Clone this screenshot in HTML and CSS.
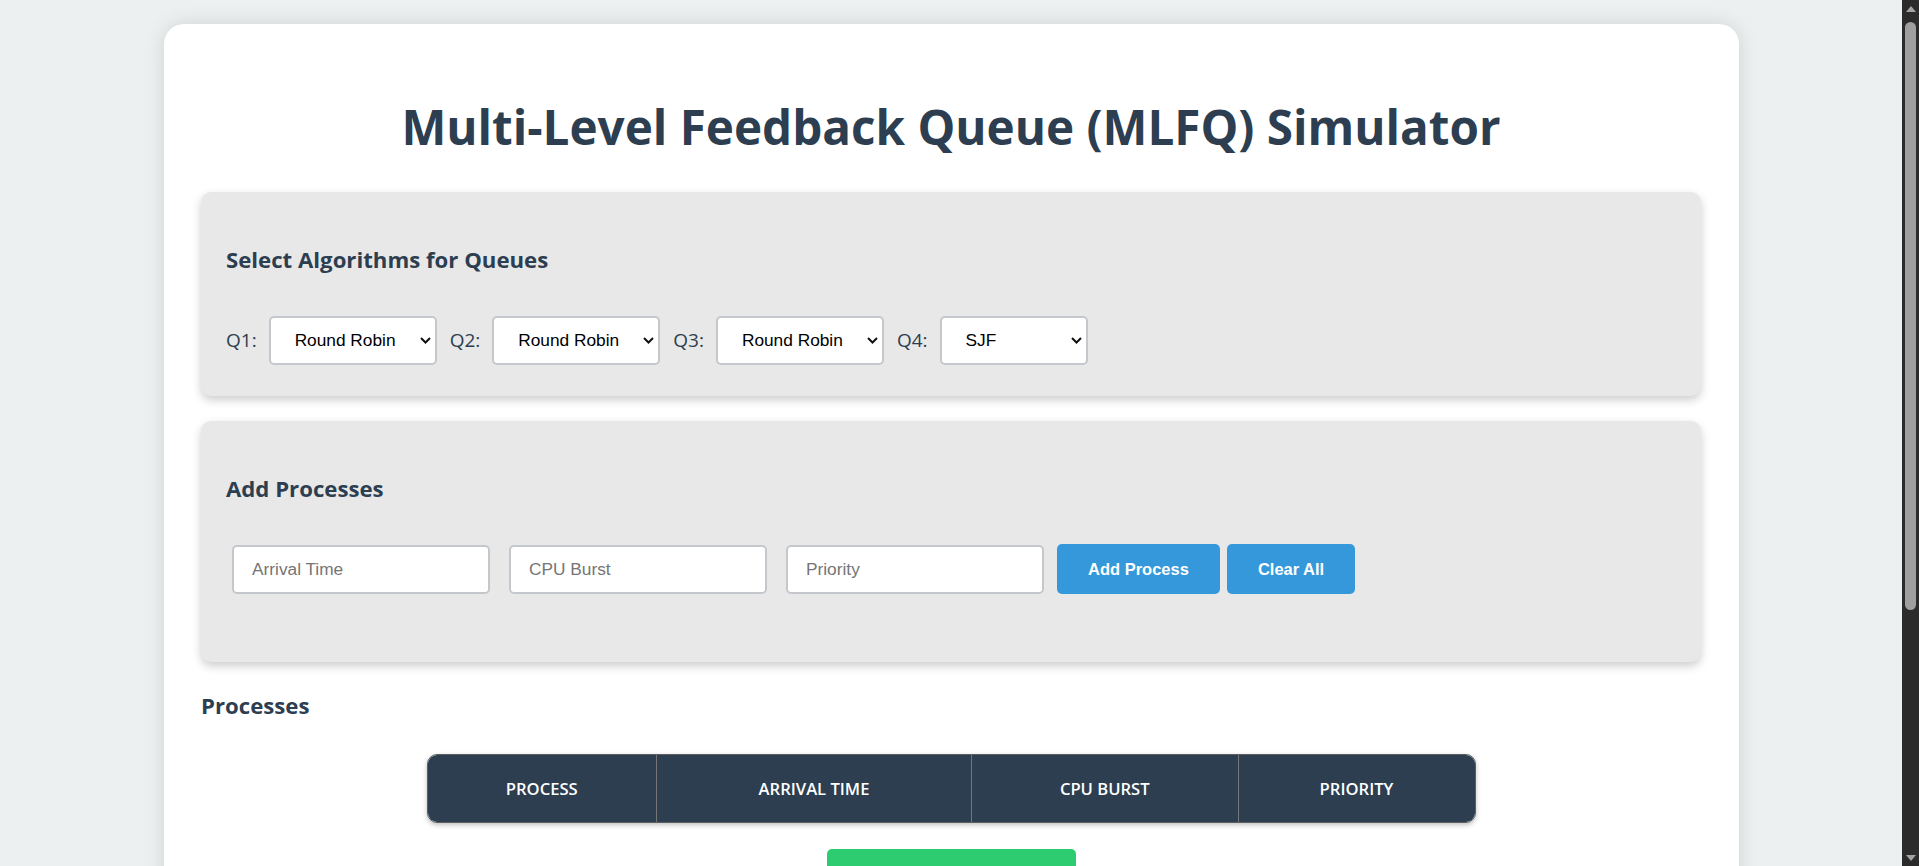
FILE: index.html
```html
<!DOCTYPE html>
<html lang="en">
<head>
<meta charset="utf-8">
<title>MLFQ Simulator</title>
<link rel="stylesheet" href="styles.css">
</head>
<body>
<div class="container">
  <h1 class="title">Multi-Level Feedback Queue (MLFQ) Simulator</h1>

  <div class="panel">
    <h3 class="panel-title">Select Algorithms for Queues</h3>
    <div class="queue-row">
      <label class="queue-label">Q1:</label>
      <select class="algo-select">
        <option selected>Round Robin</option><option>FCFS</option><option>SJF</option><option>Priority</option>
      </select>
      <label class="queue-label">Q2:</label>
      <select class="algo-select">
        <option selected>Round Robin</option><option>FCFS</option><option>SJF</option><option>Priority</option>
      </select>
      <label class="queue-label">Q3:</label>
      <select class="algo-select">
        <option selected>Round Robin</option><option>FCFS</option><option>SJF</option><option>Priority</option>
      </select>
      <label class="queue-label">Q4:</label>
      <select class="algo-select algo-select-narrow">
        <option>FCFS</option><option selected>SJF</option><option>Priority</option>
      </select>
    </div>
  </div>

  <div class="panel panel-tall">
    <h3 class="panel-title">Add Processes</h3>
    <div class="input-row">
      <input class="proc-input" type="number" placeholder="Arrival Time">
      <input class="proc-input" type="number" placeholder="CPU Burst">
      <input class="proc-input proc-input-last" type="number" placeholder="Priority">
      <button class="btn">Add Process</button>
      <button class="btn">Clear All</button>
    </div>
  </div>

  <h3 class="table-title">Processes</h3>
  <div class="table-wrap">
    <table class="proc-table">
      <colgroup>
        <col class="col-process">
        <col class="col-arrival">
        <col class="col-burst">
        <col class="col-priority">
      </colgroup>
      <thead>
        <tr>
          <th>Process</th>
          <th>Arrival Time</th>
          <th>CPU Burst</th>
          <th>Priority</th>
        </tr>
      </thead>
      <tbody></tbody>
    </table>
  </div>

  <div class="run-row">
    <button class="btn-run">Run Simulation</button>
  </div>
  <div class="results"></div>
</div>

<div class="scrollbar" aria-hidden="true">
  <div class="sb-btn">
    <svg width="10" height="6" viewBox="0 0 10 6"><polygon points="0,6 5,0 10,6" fill="#a3a3a3"/></svg>
  </div>
  <div class="sb-track"><div class="sb-thumb"></div></div>
  <div class="sb-btn">
    <svg width="10" height="6" viewBox="0 0 10 6"><polygon points="0,0 10,0 5,6" fill="#a3a3a3"/></svg>
  </div>
</div>
</body>
</html>
```

FILE: styles.css
```css
html {
  background: #ecf0f1;
  overflow: hidden;
}

body {
  margin: 0 17px 0 0;
  background: #ecf0f1;
  font-family: "Open Sans", "Noto Sans", sans-serif;
  color: #2c3e50;
}

/* browser scrollbar (drawn over the right edge) */
.scrollbar {
  position: fixed;
  top: 0;
  right: 0;
  width: 17px;
  height: 100vh;
  background: #2b2b2b;
  display: flex;
  flex-direction: column;
}

.sb-btn {
  height: 17px;
  display: flex;
  align-items: center;
  justify-content: center;
}

.sb-track {
  flex: 1;
  padding: 5px 3px 0;
}

.sb-thumb {
  height: 588px;
  background: #9f9f9f;
  border-radius: 6px;
}

.container {
  max-width: 1500px;
  margin: 24px auto;
  padding: 38px 37.5px;
  background: #ffffff;
  border-radius: 20px;
  box-shadow: 0 0 20px rgba(0, 0, 0, 0.12);
}

.title {
  margin: 37px 0;
  font-size: 47.6px;
  line-height: 56px;
  font-weight: 700;
  text-align: center;
  color: #2c3e50;
}

.panel {
  background: #e8e8e8;
  border-radius: 10px;
  padding: 54px 25px 31px;
  margin-bottom: 25px;
  box-shadow: 0 4px 10px rgba(0, 0, 0, 0.2);
}

.panel-tall {
  padding-bottom: 68px;
}

.panel-title {
  margin: 0 0 41px;
  font-size: 22.2px;
  line-height: 28px;
  font-weight: 700;
  color: #2c3e50;
}

.queue-row {
  display: flex;
  align-items: center;
  height: 50px;
}

.queue-label {
  font-size: 19px;
  margin-right: 12px;
  color: #2c3e50;
}

.algo-select {
  -webkit-appearance: none;
  appearance: none;
  box-sizing: border-box;
  width: 168px;
  height: 49px;
  margin-right: 13px;
  padding: 0 30px 0 24px;
  border: 2px solid #c4c8cc;
  border-radius: 5px;
  background: #ffffff url("data:image/svg+xml;utf8,<svg xmlns='http://www.w3.org/2000/svg' width='11' height='7'><path d='M1 1l4.5 4.5L10 1' fill='none' stroke='%23111' stroke-width='2'/></svg>") no-repeat right 4px center;
  font-family: "Liberation Sans", Arial, sans-serif;
  font-size: 17.3px;
  color: #000000;
}

.algo-select-narrow {
  width: 148px;
}

.input-row {
  display: flex;
  align-items: center;
  height: 50px;
  padding-left: 6px;
}

.proc-input {
  box-sizing: border-box;
  width: 258px;
  height: 49px;
  margin: 0 19px 0 0;
  padding: 0 18px;
  border: 2px solid #c4c8cc;
  border-radius: 5px;
  background: #ffffff;
  font-family: "Liberation Sans", Arial, sans-serif;
  font-size: 17.3px;
  color: #000000;
  outline: none;
}

.proc-input::placeholder {
  color: #757575;
}

.proc-input-last {
  margin-right: 13px;
}

.btn {
  height: 50px;
  margin-right: 7px;
  padding: 0 31px;
  border: none;
  border-radius: 5px;
  background: #3498db;
  color: #ffffff;
  font-family: "Liberation Sans", Arial, sans-serif;
  font-weight: 700;
  font-size: 16.5px;
}

.table-title {
  margin: 30px 0 34px;
  font-size: 22.2px;
  line-height: 28px;
  font-weight: 700;
  color: #2c3e50;
}

.table-wrap {
  width: 1047px;
  margin: 0 auto;
  border: 1px solid #5e5e5e;
  border-radius: 10px;
  overflow: hidden;
  box-shadow: 0 2px 5px rgba(0, 0, 0, 0.25);
}

.proc-table {
  width: 100%;
  border-collapse: collapse;
  table-layout: fixed;
}

.col-process { width: 229px; }
.col-arrival { width: 315px; }
.col-burst { width: 266.5px; }
.col-priority { width: 236.5px; }

.proc-table th {
  height: 67px;
  padding: 0;
  background: #2c3e50;
  color: #ffffff;
  font-size: 16.6px;
  font-weight: 600;
  text-transform: uppercase;
  text-align: center;
  border-left: 1px solid #767676;
}

.proc-table th:first-child {
  border-left: none;
}

.run-row {
  display: flex;
  justify-content: center;
  margin-top: 26px;
}

.btn-run {
  width: 249px;
  height: 56px;
  border: none;
  border-radius: 5px;
  background: #2ecc71;
  color: #ffffff;
  font-family: "Liberation Sans", Arial, sans-serif;
  font-weight: 700;
  font-size: 16.5px;
  line-height: 18px;
}

.results {
  min-height: 260px;
}
```
